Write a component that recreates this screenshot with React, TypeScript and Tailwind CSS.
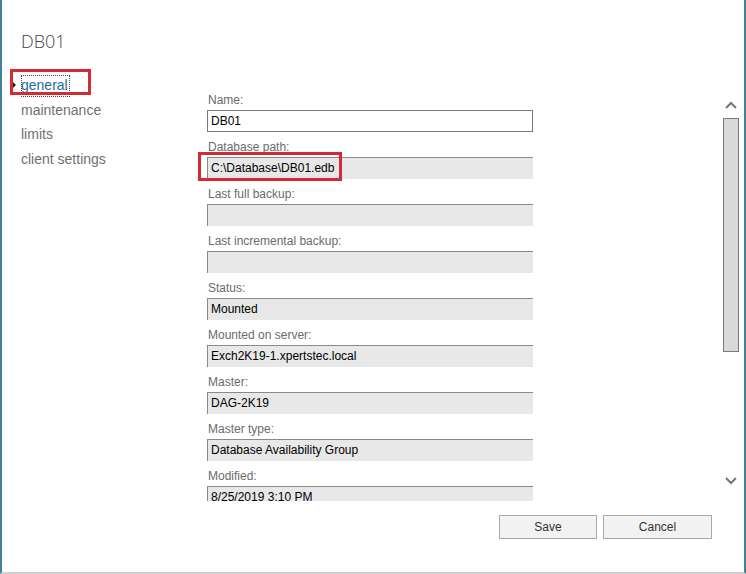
const fields: Array<{ label: string; value: string; editable?: boolean }> = [
  { label: 'Name:', value: 'DB01', editable: true },
  { label: 'Database path:', value: 'C:\\Database\\DB01.edb' },
  { label: 'Last full backup:', value: '' },
  { label: 'Last incremental backup:', value: '' },
  { label: 'Status:', value: 'Mounted' },
  { label: 'Mounted on server:', value: 'Exch2K19-1.xpertstec.local' },
  { label: 'Master:', value: 'DAG-2K19' },
  { label: 'Master type:', value: 'Database Availability Group' },
  { label: 'Modified:', value: '8/25/2019 3:10 PM' },
]

const navItems = ['general', 'maintenance', 'limits', 'client settings']

const Chevron = ({ up }: { up?: boolean }) => (
  <svg width="12" height="8" viewBox="0 0 12 8" className={up ? '' : 'rotate-180'}>
    <path d="M1 7 L6 2 L11 7" fill="none" stroke="#777" strokeWidth="2" />
  </svg>
)

const App = () => {
  return (
    <div className="relative flex h-[574px] w-[746px] flex-col overflow-hidden border-r-2 border-b-2 border-l-2 border-r-[#3f8397] border-b-[#cfcfcf] border-l-[#3f8397] bg-white font-['Liberation_Sans',Arial,sans-serif]">
      <h1 className="mt-[29px] h-[25px] pl-[19px] font-['Open_Sans',sans-serif] text-[18px] leading-[25px] font-light text-[#444]">
        DB01
      </h1>

      <div className="mt-[19px] flex">
        <nav className="flex w-[205px] flex-col pl-[19px]">
          {navItems.map((item, i) => (
            <div
              key={item}
              className={
                i === 0
                  ? 'relative h-[24.7px] text-[14px] leading-[24px] text-[#1f6e8e]'
                  : 'h-[24.7px] text-[14px] leading-[24px] text-[#707070]'
              }
            >
              {i === 0 && (
                <>
                  <span className="absolute top-[8px] left-[-9px] h-0 w-0 border-y-[4px] border-l-[4px] border-y-transparent border-l-[#222]" />
                  <span className="absolute top-[2px] left-0 h-[22px] w-[49px] border border-dotted border-[#444]" />
                </>
              )}
              {item}
            </div>
          ))}
        </nav>

        <div className="mt-[19px] flex h-[409px] flex-1">
          <div className="flex-1 overflow-hidden">
            {fields.map((f) => (
              <div key={f.label} className="mb-[7px]">
                <div className="mb-[2px] h-[16px] pl-[1px] text-[12px] leading-[16px] text-[#6b6b6b]">
                  {f.label}
                </div>
                {f.editable ? (
                  <div className="h-[22px] w-[326px] border border-[#7a7a7a] bg-white pl-[3px] text-[12px] leading-[20px] text-black">
                    {f.value}
                  </div>
                ) : (
                  <div className="h-[22px] w-[326px] border-t border-l border-t-[#8a8a8a] border-l-[#8a8a8a] bg-[#e8e8e8] pl-[3px] text-[12px] leading-[21px] text-black">
                    {f.value}
                  </div>
                )}
              </div>
            ))}
          </div>

          <div className="mr-[5px] flex w-[16px] flex-col items-center">
            <div className="flex h-[26px] items-center justify-center">
              <Chevron up />
            </div>
            <div className="h-[234px] w-[16px] border border-[#7a7a7a] bg-[#d9d9d9]" />
            <div className="flex-1" />
            <div className="mb-[10px] flex h-[20px] items-center justify-center">
              <Chevron />
            </div>
          </div>
        </div>
      </div>

      <div className="mt-[14px] flex justify-end gap-[6px] pr-[32px]">
        <button className="h-[24px] w-[98px] border border-[#a9a9a9] bg-[#f2f2f2] text-[12px] text-[#333]">
          Save
        </button>
        <button className="h-[24px] w-[109px] border border-[#a9a9a9] bg-[#f2f2f2] text-[12px] text-[#333]">
          Cancel
        </button>
      </div>

      {/* red annotation boxes */}
      <div className="absolute top-[69px] left-[8px] h-[26px] w-[81px] border-[3px] border-[#d42a35]" />
      <div className="absolute top-[152px] left-[196px] h-[29px] w-[144px] border-[3px] border-[#d42a35]" />
    </div>
  )
}

export default App
